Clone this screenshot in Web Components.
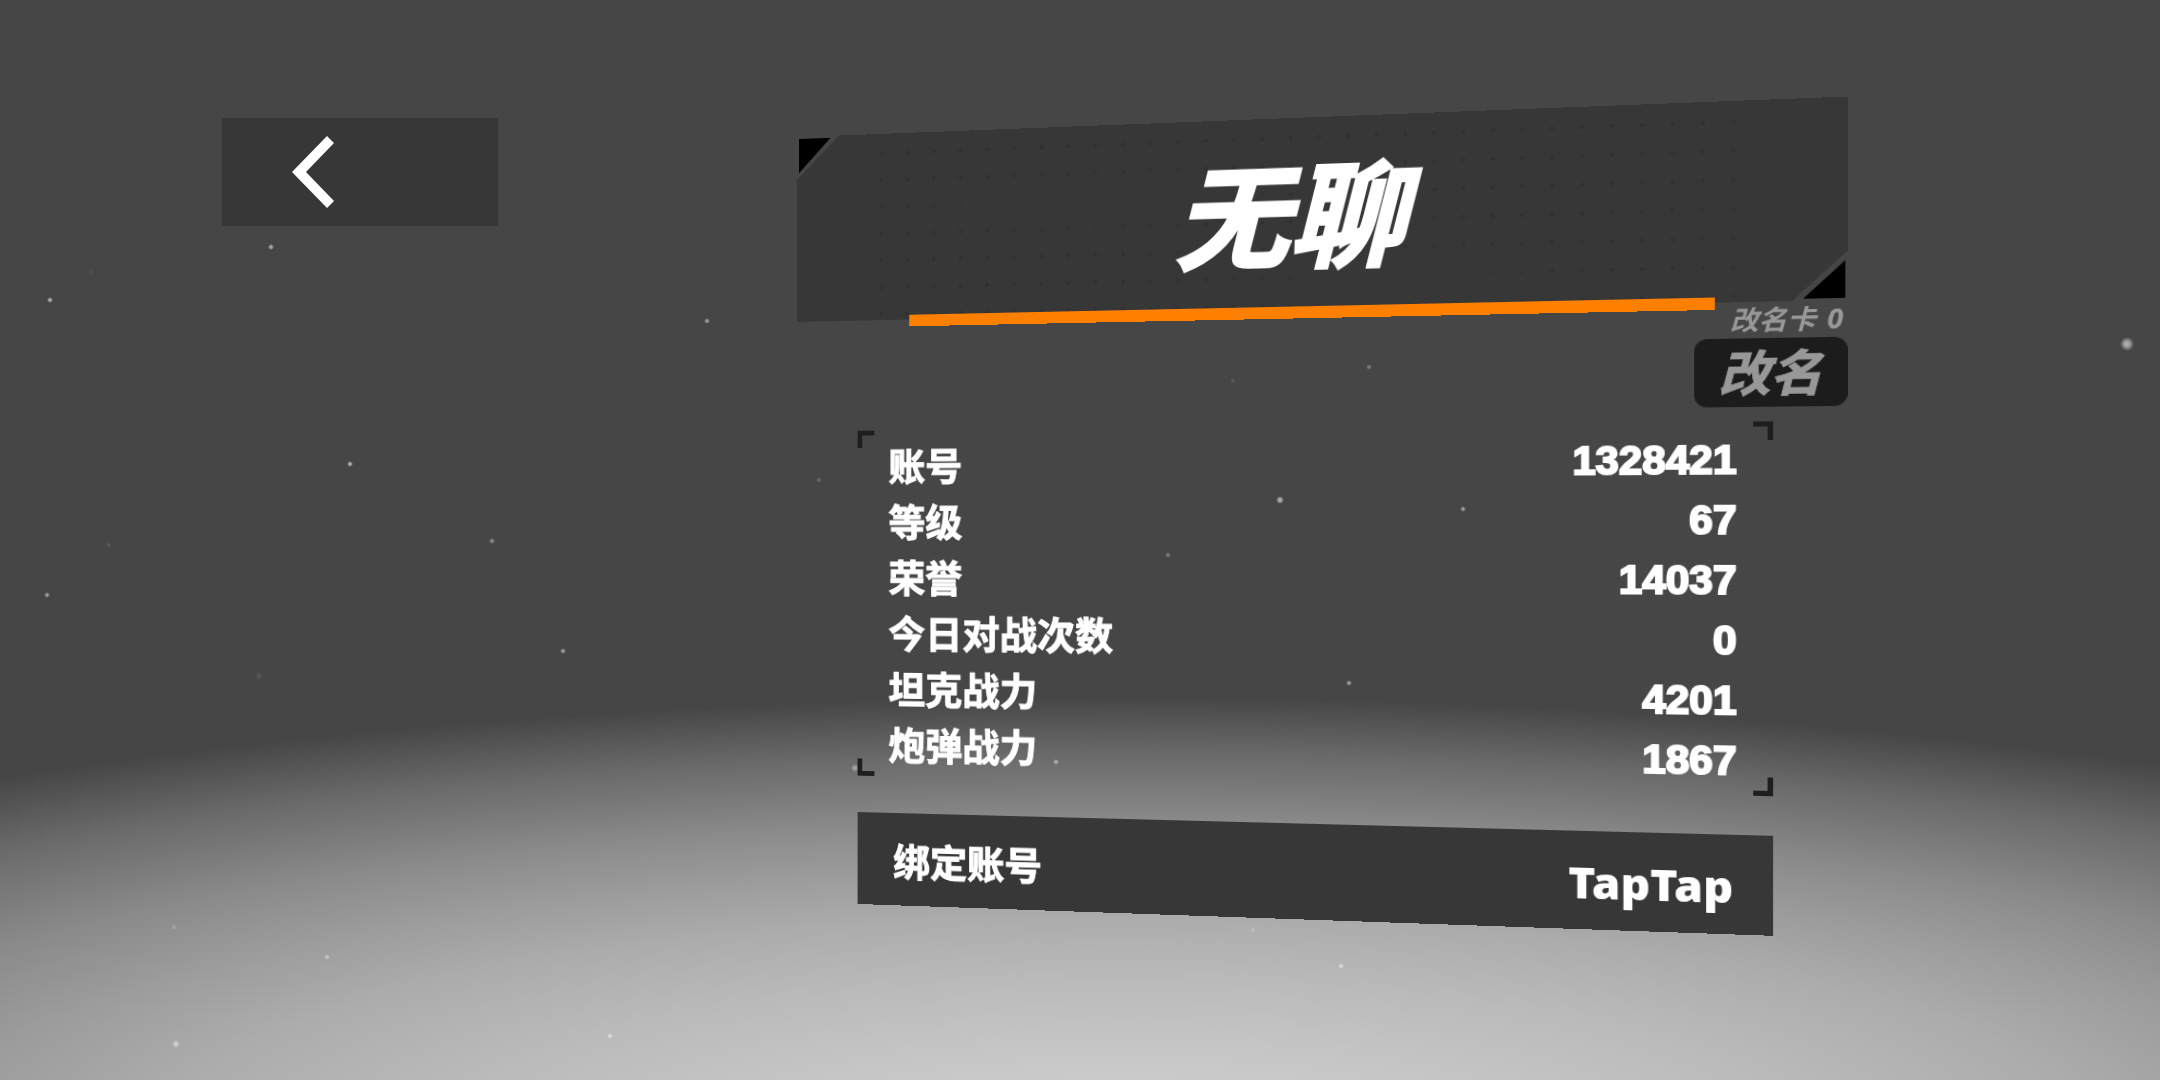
<!DOCTYPE html>
<html lang="zh-CN">
<head>
<meta charset="utf-8">
<meta name="viewport" content="width=device-width, initial-scale=1">
<title>无聊</title>
<style>
   body {
      margin: 0;
      background: #464646;
      color: #fff;
      font-family: "Noto Sans", "Noto Sans CJK SC", sans-serif;
      font-weight: 700;
   }
</style>
</head>
<body>

<profile-stage>
   <back-button slot="back"></back-button>
   <name-plate>无聊</name-plate>
   <rename-box cards="0"></rename-box>
   <stat-list></stat-list>
   <bind-row provider="TapTap">绑定账号</bind-row>
</profile-stage>

<script>
const
   stats = [
      [ "账号", "1328421" ],
      [ "等级", "67" ],
      [ "荣誉", "14037" ],
      [ "今日对战次数", "0" ],
      [ "坦克战力", "4201" ],
      [ "炮弹战力", "1867" ]
   ],

   // x, y, radius, opacity
   stars = [
      [ 50, 300, 2, .6 ], [ 271, 247, 2, .6 ], [ 707, 321, 2, .5 ], [ 350, 464, 2, .6 ],
      [ 47, 595, 2, .5 ], [ 492, 541, 2, .4 ], [ 563, 651, 2, .5 ], [ 259, 676, 3, .1 ],
      [ 109, 545, 2, .1 ], [ 91, 272, 2, .05 ], [ 1280, 500, 3, .6 ], [ 1463, 509, 2, .5 ],
      [ 1168, 555, 2, .3 ], [ 1349, 683, 2, .5 ], [ 1369, 367, 2, .3 ], [ 1233, 381, 2, .1 ],
      [ 819, 480, 2, .2 ], [ 1056, 762, 2, .5 ], [ 2127, 344, 6, .6 ], [ 174, 927, 2, .2 ],
      [ 327, 957, 2, .4 ], [ 176, 1044, 3, .5 ], [ 610, 1036, 2, .5 ], [ 1253, 930, 2, .2 ],
      [ 1341, 966, 2, .5 ], [ 855, 768, 3, .4 ]
   ],

   define = ( name, html, setup ) => {
      const
         template = document.createElement( "template" )
      ;
      template.innerHTML = html;

      window.customElements.define( name, class extends HTMLElement {
         constructor() {
            super();
            this.attachShadow( { mode: "open" } );
            this.shadowRoot.append( template.content.cloneNode( true ) );
            if( setup ) setup( this, this.shadowRoot );
         }
      } );
   }
;


/* == [ stage: floor light, stars, tilted panel ]
== == == == == == == == == */
define( "profile-stage", `
   <style>
      :host {
         display: flex;
         align-items: flex-start;
         gap: 283px;
         box-sizing: border-box;
         min-height: 100vh;
         padding: 117px 346px 40px 222px;
         position: relative;
         overflow: hidden;
         background: radial-gradient(
            ellipse 90% 442px at 52% calc( 100% + 59px ),
            #cecece 0%, #cacaca 14%, #c4c4c4 23%, #bababa 36%, #acacac 50%,
            #9c9c9c 61%, #8a8a8a 72%, #6a6a6a 87%, #464646 100%
         );
         perspective: 935px;
         perspective-origin: 50% 50%;
      }
      svg {
         position: absolute;
         inset: 0;
         width: 100%;
         height: 100%;
      }
      section {
         flex: 1;
         transform: rotateY( -5deg );
         transform-origin: 52% 50%;
      }
   </style>
   <svg viewBox="0 0 2160 1080" preserveAspectRatio="xMidYMid slice" aria-hidden="true">
      <defs>
         <radialGradient id="star">
            <stop offset="0" stop-color="#fff"></stop>
            <stop offset=".4" stop-color="#fff" stop-opacity=".8"></stop>
            <stop offset="1" stop-color="#fff" stop-opacity="0"></stop>
         </radialGradient>
      </defs>
      <g></g>
   </svg>
   <slot name="back"></slot>
   <section><slot></slot></section>
`, ( el, root ) => {
   root.querySelector( "g" ).innerHTML = stars.map( ( [ x, y, r, o ] ) =>
      `<circle cx="${ x }" cy="${ y }" r="${ r + 1 }" fill="url(#star)" opacity="${ o }"></circle>`
   ).join( "" );
} );


/* == [ back button ]
== == == == == == == == == */
define( "back-button", `
   <style>
      :host { display: block; margin-top: 1px; }
      button {
         display: flex;
         align-items: center;
         width: 276px;
         height: 108px;
         padding: 0 70px;
         border: 0;
         background: #373737;
         cursor: pointer;
      }
      svg { width: 42px; height: 72px; }
   </style>
   <button type="button" aria-label="返回">
      <svg viewBox="0 0 42 72">
         <polygon points="35,0 42,7 14,36 42,65 35,72 0,36" fill="#fff"></polygon>
      </svg>
   </button>
` );


/* == [ name plate ]
== == == == == == == == == */
define( "name-plate", `
   <style>
      :host {
         display: block;
         position: relative;
      }
      h1 {
         display: flex;
         justify-content: center;
         align-items: center;
         box-sizing: border-box;
         height: 194px;
         margin: 0;
         padding-right: 16px;
         clip-path: polygon( 45px 0, 100% 0, 100% calc( 100% - 47px ), calc( 100% - 50px ) 100%, 0 100%, 0 45px );
         background:
            radial-gradient( ellipse at 30% 40%, #373737 0 8%, transparent 20% ),
            radial-gradient( ellipse at 60% 90%, #373737 0 8%, transparent 18% ),
            linear-gradient( 90deg, #373737 50px, transparent 90px calc( 100% - 110px ), #373737 calc( 100% - 70px ) ),
            radial-gradient( circle, #303030 1px, transparent 3px ) 20px 6px / 28px 28px,
            #373737;
         font-size: 114px;
         font-style: italic;
         line-height: 1;
         -webkit-text-stroke: 3px #fff;
      }
      i { position: absolute; background: #000; }
      .top {
         top: 2px;
         left: 2px;
         width: 34px;
         height: 36px;
         clip-path: polygon( 0 0, 100% 0, 0 100% );
      }
      .bottom {
         right: 2px;
         bottom: 2px;
         width: 38px;
         height: 36px;
         clip-path: polygon( 100% 0, 100% 100%, 0 100% );
      }
      .bar {
         right: 120px;
         bottom: -7px;
         left: 120px;
         height: 12px;
         background: #ff8000;
      }
   </style>
   <h1><slot></slot></h1>
   <i class="top"></i>
   <i class="bottom"></i>
   <i class="bar"></i>
` );


/* == [ rename button and its card count ]
== == == == == == == == == */
define( "rename-box", `
   <style>
      :host {
         display: flex;
         flex-direction: column;
         align-items: flex-end;
         margin-top: 3px;
         color: #989898;
         font-style: italic;
      }
      p {
         display: flex;
         gap: 10px;
         margin: 0 0 4px;
         padding-right: 4px;
         font-size: 26px;
         line-height: 28px;
      }
      button {
         width: 139px;
         height: 66px;
         padding: 0;
         border: 0;
         border-radius: 12px;
         background: #1c1c1c;
         color: inherit;
         font: inherit;
         font-size: 47px;
         line-height: 66px;
         -webkit-text-stroke: 1px #989898;
         cursor: pointer;
      }
   </style>
   <p><span>改名卡</span><span id="cards"></span></p>
   <button type="button">改名</button>
`, ( el, root ) => {
   root.querySelector( "#cards" ).textContent = el.getAttribute( "cards" );
} );


/* == [ stats inside corner marks ]
== == == == == == == == == */
define( "stat-list", `
   <style>
      :host {
         display: block;
         position: relative;
         margin: 14px 67px 0 65px;
         padding: 8px 33px 4px;
      }
      dl { margin: 0; }
      div {
         display: flex;
         justify-content: space-between;
         font-size: 39px;
         line-height: 58px;
      }
      dt { -webkit-text-stroke: 1px #fff; }
      dd {
         margin: 0;
         font-family: "Liberation Sans", sans-serif;
         -webkit-text-stroke: 2px #fff;
      }
      i {
         position: absolute;
         width: 13px;
         height: 13px;
         border: 0 solid #1e1e1e;
      }
      .tl { top: 0; left: 0; border-width: 5px 0 0 5px; }
      .tr { top: 0; right: 0; border-width: 5px 5px 0 0; }
      .bl { bottom: 0; left: 0; border-width: 0 0 5px 5px; }
      .br { right: 0; bottom: 0; border-width: 0 5px 5px 0; }
   </style>
   <dl></dl>
   <i class="tl"></i><i class="tr"></i><i class="bl"></i><i class="br"></i>
`, ( el, root ) => {
   root.querySelector( "dl" ).innerHTML = stats.map( ( [ label, value ] ) =>
      `<div><dt>${ label }</dt><dd>${ value }</dd></div>`
   ).join( "" );
} );


/* == [ linked account ]
== == == == == == == == == */
define( "bind-row", `
   <style>
      :host {
         display: flex;
         justify-content: space-between;
         align-items: center;
         height: 96px;
         margin: 38px 67px 0 65px;
         padding: 4px 36px 0 38px;
         box-sizing: border-box;
         background: #373737;
         font-size: 39px;
         line-height: 58px;
         -webkit-text-stroke: 1px #fff;
      }
      b {
         font-family: "Noto Sans", sans-serif;
         font-size: 43px;
         -webkit-text-stroke: 0;
      }
   </style>
   <slot></slot>
   <b></b>
`, ( el, root ) => {
   root.querySelector( "b" ).textContent = el.getAttribute( "provider" );
} );
</script>

</body>
</html>
